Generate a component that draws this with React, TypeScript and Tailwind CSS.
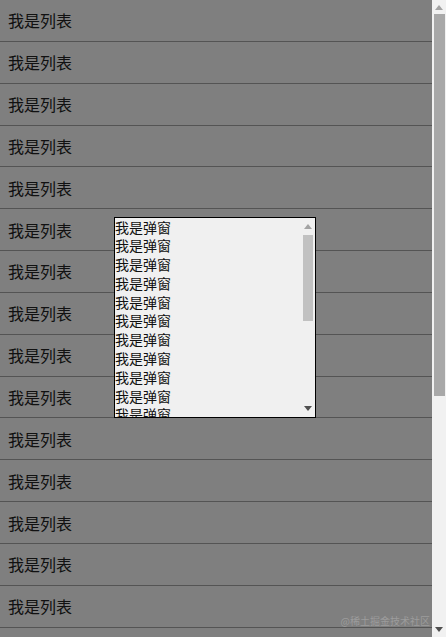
import React from "react";

const font = { fontFamily: '"Noto Sans CJK SC", "Microsoft YaHei", sans-serif' };

function UpArrow({ color = "#a3a3a3" }: { color?: string }) {
  return (
    <svg width="8" height="5" viewBox="0 0 8 5">
      <path d="M0 5 L4 0 L8 5 Z" fill={color} />
    </svg>
  );
}
function DownArrow({ color = "#505050" }: { color?: string }) {
  return (
    <svg width="8" height="5" viewBox="0 0 8 5">
      <path d="M0 0 L8 0 L4 5 Z" fill={color} />
    </svg>
  );
}

export default function App() {
  const rows = Array.from({ length: 16 });
  const items = Array.from({ length: 12 });
  return (
    <div className="relative flex h-[637px] w-[446px] overflow-hidden bg-white" style={font}>
      <div className="relative flex-1 overflow-hidden">
        <div className="flex flex-col">
          {rows.map((_, i) => (
            <div
              key={i}
              className="flex h-[41.85px] shrink-0 items-center border-b border-[#a8a8a8] pl-2 text-[16px] text-[#222]"
            >
              我是列表
            </div>
          ))}
        </div>
        <div className="absolute inset-0 bg-black/50" />
        <div className="absolute bottom-[9px] right-[2px] text-[10px] text-[#9c9c9c]">@稀土掘金技术社区</div>
        <div className="absolute inset-0 flex items-center justify-center">
          <div className="ml-[-2px] mt-[-3px] flex h-[201px] w-[202px] border border-black bg-[#f0f0f0]">
            <div className="flex-1 overflow-hidden">
              {items.map((_, i) => (
                <div key={i} className="h-[18.8px] text-[14px] leading-[18.8px] text-[#111]">
                  我是弹窗
                </div>
              ))}
            </div>
            <div className="flex w-[15px] flex-col items-center bg-[#f0f0f0]">
              <div className="flex h-[17px] items-center justify-center">
                <UpArrow />
              </div>
              <div className="h-[86px] w-[10px] bg-[#c1c1c1]" />
              <div className="flex-1" />
              <div className="flex h-[17px] items-center justify-center">
                <DownArrow />
              </div>
            </div>
          </div>
        </div>
      </div>
      <div className="flex w-[14px] flex-col items-center bg-[#f1f1f1]">
        <div className="flex h-[14px] items-center justify-center">
          <UpArrow color="#a3a3a3" />
        </div>
        <div className="h-[382px] w-[11px] bg-[#a8a8a8]" />
        <div className="flex-1" />
        <div className="flex h-[16px] items-center justify-center">
          <DownArrow />
        </div>
      </div>
    </div>
  );
}
